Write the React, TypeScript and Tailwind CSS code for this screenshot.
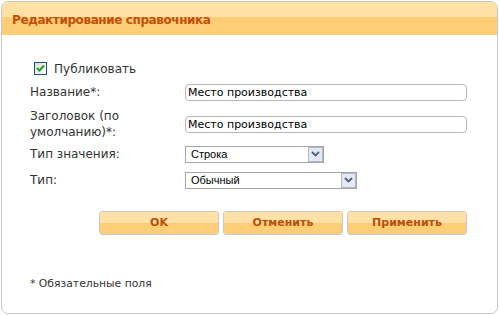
import React from "react";

const verdana = { fontFamily: '"DejaVu Sans", Verdana, sans-serif' };

function Checkbox() {
  return (
    <div className="w-[13px] h-[13px] border border-[#1c5180] bg-gradient-to-br from-[#dcdcd7] to-white flex items-center justify-center">
      <svg width="9" height="9" viewBox="0 0 9 9">
        <path d="M1 4 L3.5 6.5 L8 1.5" stroke="#21a121" strokeWidth="2" fill="none" />
      </svg>
    </div>
  );
}

function TextInput({ value }: { value: string }) {
  return (
    <div className="w-[282px] h-[17px] border border-[#b8b8b8] rounded-[4px] bg-white flex items-center pl-[2px] text-[11px] text-black leading-none">
      {value}
    </div>
  );
}

function Select({ value, width }: { value: string; width: string }) {
  return (
    <div className={`${width} h-[17px] border border-[#a5a5a5] bg-white flex items-center justify-between`}>
      <span className="pl-[5px] text-[11px] text-black leading-none" style={{ fontFamily: '"Liberation Sans", Arial, sans-serif' }}>
        {value}
      </span>
      <div className="w-[15px] h-[15px] border border-[#b1b9c8] bg-[#e3e8f1] flex items-center justify-center">
        <svg width="9" height="6" viewBox="0 0 9 6">
          <path d="M1 1 L4.5 4.5 L8 1" stroke="#4d6185" strokeWidth="1.8" fill="none" />
        </svg>
      </div>
    </div>
  );
}

function Button({ label }: { label: string }) {
  return (
    <div className="w-[120px] h-[24px] border border-[#c8c8c8] rounded-[3px] overflow-hidden flex flex-col relative">
      <div className="h-[11px] bg-[#ffe0a6]" />
      <div className="flex-1 bg-[#ffcd78]" />
      <div className="absolute inset-0 flex items-center justify-center text-[11px] font-bold text-[#b84f0a]">
        {label}
      </div>
    </div>
  );
}

export default function App() {
  return (
    <div className="w-[499px] h-[315px] bg-white p-px" style={verdana}>
      <div className="w-[497px] h-[313px] border border-[#c8c8c8] rounded-[7px] overflow-hidden flex flex-col">
        <div className="h-[33px] flex flex-col relative">
          <div className="h-[15px] bg-[#ffe0a5]" />
          <div className="flex-1 bg-[#ffcd75]" />
          <div className="absolute inset-0 flex items-center pl-[10px] pt-[3px] text-[12px] tracking-[-0.4px] font-bold text-[#c0500a]">
            Редактирование справочника
          </div>
        </div>
        <div className="flex flex-col pl-[28px] text-[12px] text-[#333]">
          <div className="mt-[27px] h-[13px] flex items-center pl-[4px] gap-[7px]">
            <Checkbox />
            <span>Публиковать</span>
          </div>
          <div className="mt-[8px] flex items-center">
            <div className="w-[155px]">Название*:</div>
            <TextInput value="Место производства" />
          </div>
          <div className="mt-[7px] flex items-center">
            <div className="w-[155px] leading-[16px]">
              Заголовок (по
              <br />
              умолчанию)*:
            </div>
            <TextInput value="Место производства" />
          </div>
          <div className="mt-[5px] flex items-center">
            <div className="w-[155px]">Тип значения:</div>
            <Select value="Строка" width="w-[139px]" />
          </div>
          <div className="mt-[8px] flex items-center">
            <div className="w-[155px]">Тип:</div>
            <Select value="Обычный" width="w-[172px]" />
          </div>
          <div className="mt-[22px] flex pl-[69px] gap-[4px]">
            <Button label="OK" />
            <Button label="Отменить" />
            <Button label="Применить" />
          </div>
          <div className="mt-[42px] text-[10.8px] leading-[14px]">* Обязательные поля</div>
        </div>
      </div>
    </div>
  );
}
